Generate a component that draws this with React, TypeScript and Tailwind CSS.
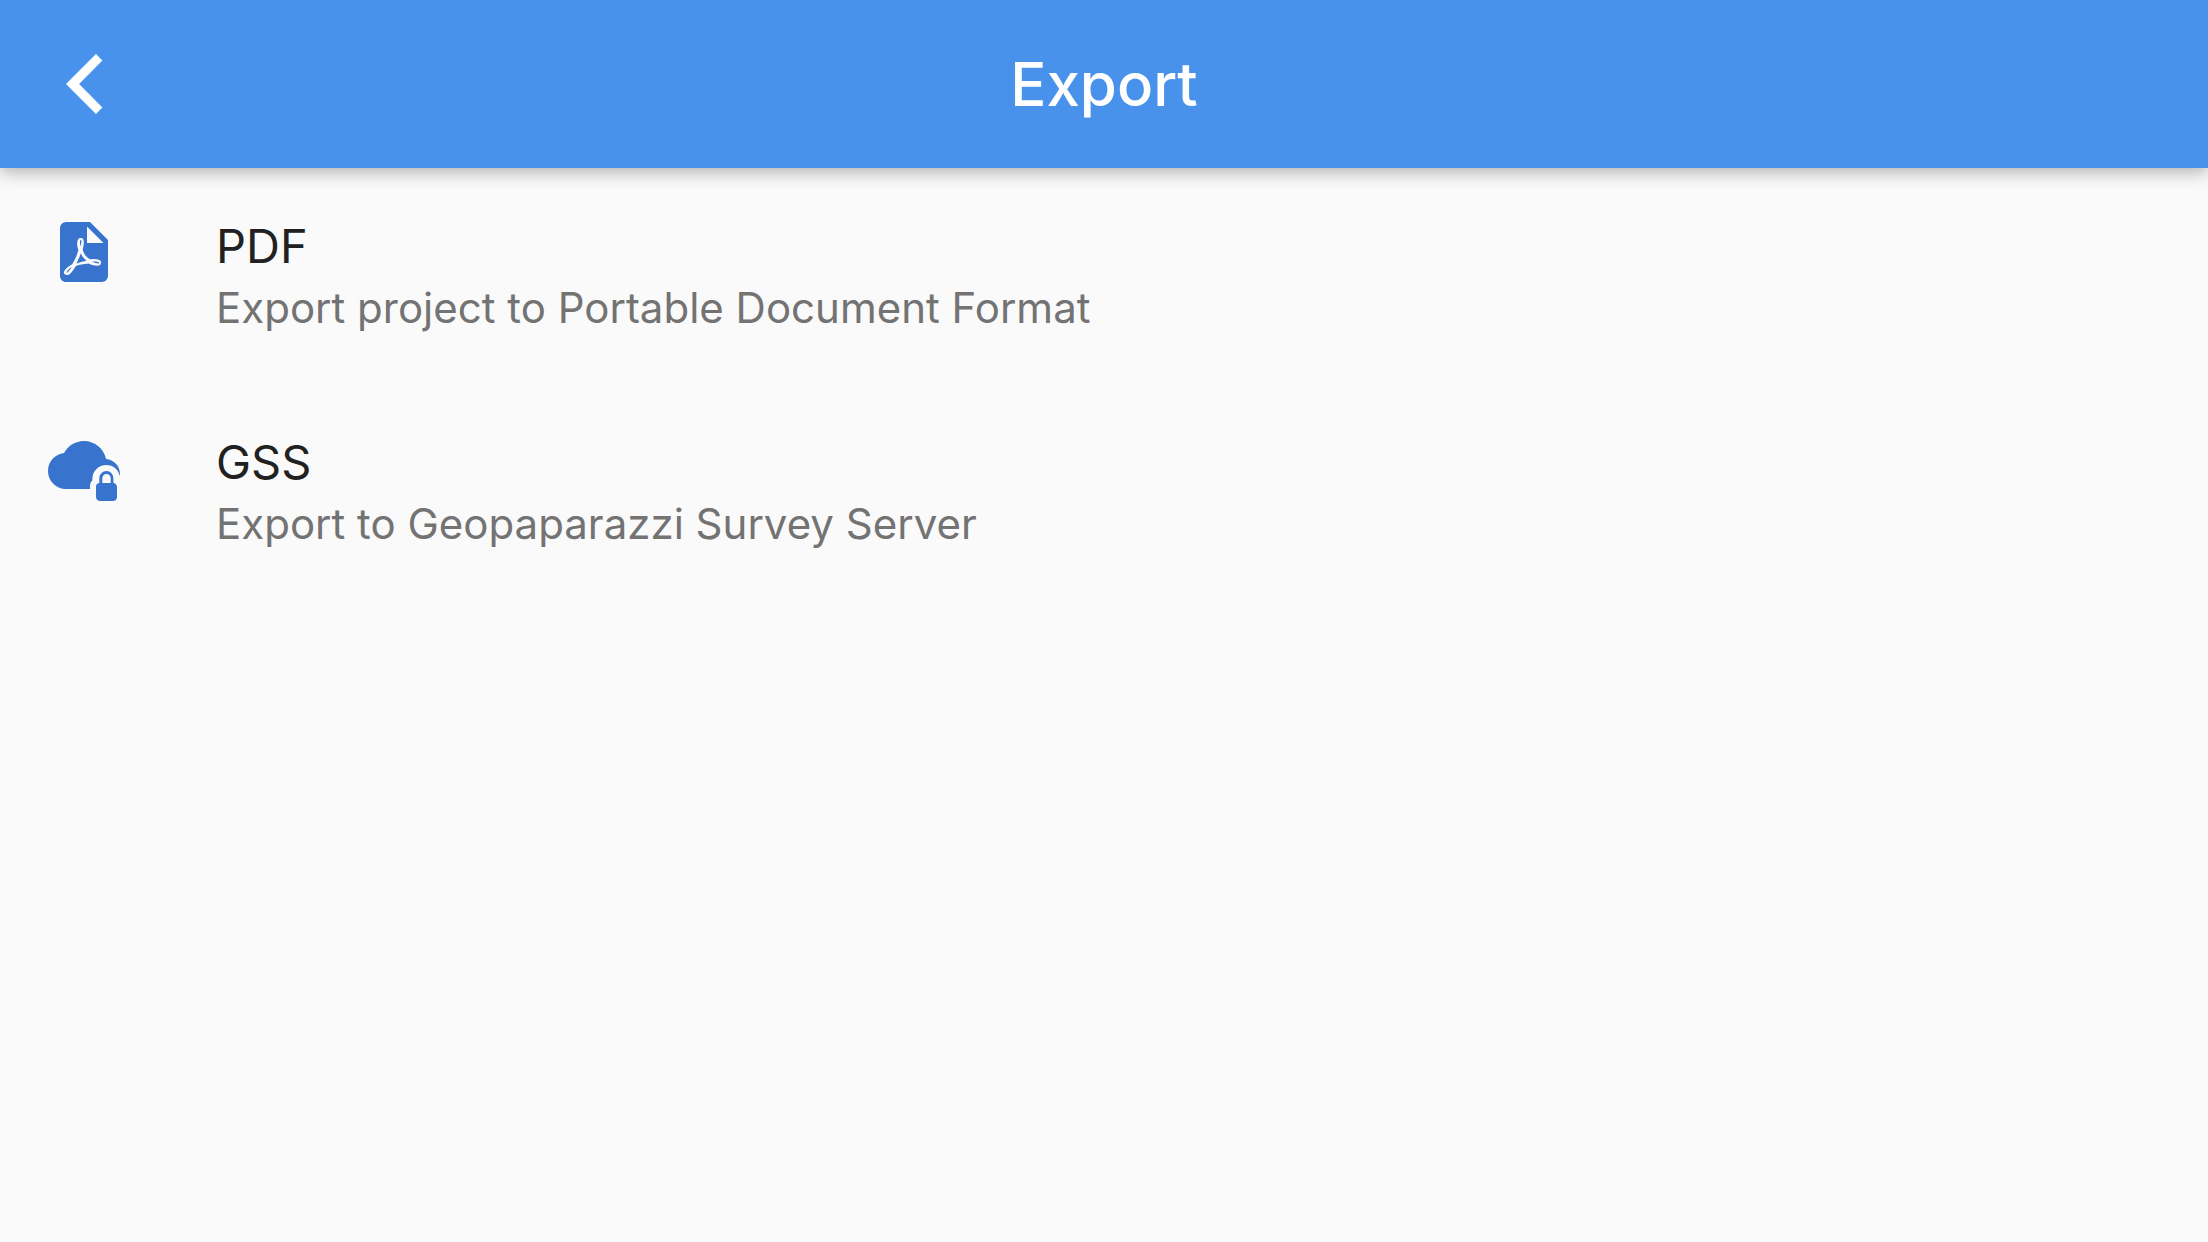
import type { ReactNode } from "react";

function BackIcon() {
  return (
    <svg viewBox="0 0 72 72" className="size-[72px]" fill="currentColor" aria-hidden="true">
      <path d="M48 6L54.4 12.4L31.1 36L54.4 59.6L48 66L18 36Z" />
    </svg>
  );
}

function PdfIcon() {
  return (
    <svg viewBox="1 0 24 24" className="size-[72px]" fill="currentColor" aria-hidden="true">
      <path d="M14,9H19.5L14,3.5V9M7,2H15L21,8V20A2,2 0 0,1 19,22H7C5.89,22 5,21.1 5,20V4A2,2 0 0,1 7,2M11.93,12.44C12.34,13.34 12.86,14.08 13.46,14.59L13.87,14.91C13,15.07 11.8,15.35 10.53,15.84V15.84L10.42,15.88L10.92,14.84C11.37,13.97 11.7,13.18 11.93,12.44M18.41,16.25C18.59,16.07 18.68,15.84 18.69,15.59C18.72,15.39 18.67,15.2 18.57,15.04C18.28,14.57 17.53,14.35 16.29,14.35L15,14.42L14.13,13.84C13.5,13.32 12.93,12.41 12.53,11.28L12.57,11.14C12.9,9.81 13.21,8.2 12.55,7.54C12.39,7.38 12.17,7.3 11.94,7.3H11.7C11.33,7.3 11,7.69 10.91,8.07C10.54,9.4 10.76,10.13 11.13,11.34V11.35C10.88,12.23 10.56,13.25 10.05,14.28L9.09,16.08L8.2,16.57C7,17.32 6.43,18.16 6.32,18.69C6.28,18.88 6.3,19.05 6.37,19.23L6.4,19.28L6.88,19.59L7.32,19.7C8.13,19.7 9.05,18.75 10.29,16.63L10.47,16.56C11.5,16.23 12.78,16 14.5,15.81C15.53,16.32 16.74,16.55 17.5,16.55C17.94,16.55 18.24,16.44 18.41,16.25M18,15.54L18.09,15.65C18.08,15.75 18.05,15.76 18,15.78H17.96L17.77,15.8C17.31,15.8 16.6,15.61 15.87,15.29C15.96,15.19 16,15.19 16.1,15.19C17.5,15.19 17.9,15.44 18,15.54M8.83,17C8.18,18.19 7.59,18.85 7.14,19C7.19,18.62 7.64,17.96 8.35,17.31L8.83,17M11.85,10.09C11.62,9.19 11.61,8.46 11.78,8.04L11.85,7.92L12,7.97C12.17,8.21 12.19,8.53 12.09,9.07L12.06,9.23L11.9,10.05L11.85,10.09Z" />
    </svg>
  );
}

function CloudLockIcon() {
  return (
    <svg viewBox="0 0 24 24" className="size-[72px]" fill="currentColor" aria-hidden="true">
      <path d="M19.35 9.03C18.67 5.59 15.64 3 12 3C9.11 3 6.6 4.64 5.35 7.04C2.34 7.36 0 9.9 0 13A6 6 0 0 0 6 19H14V18C14 17.26 14.3 16.6 14.8 16.1V15.5C14.8 13 16.9 11 19.4 11C21.7 11 23.6 12.6 23.9 14.7L24 14C24 11.36 21.95 9.22 19.35 9.03Z" />
      <path d="M21.8 17V15.5C21.8 14.1 20.8 13 19.5 13S17.1 14.1 17.1 15.5V17C16.5 17 16 17.6 16 18.2V21.7C16 22.4 16.6 23 17.2 23H21.7C22.4 23 23 22.4 23 21.8V18.3C23 17.6 22.4 17 21.8 17M20.9 17H18.1V15.5C18.1 14.6 18.7 14 19.5 14S20.9 14.6 20.9 15.5V17Z" />
    </svg>
  );
}

function ExportItem({ icon, title, subtitle }: { icon: ReactNode; title: string; subtitle: string }) {
  return (
    <li>
      <button type="button" className="flex h-[216px] w-full items-start gap-24 px-12 pt-12 text-left">
        <span className="shrink-0 text-[#3874cd]">{icon}</span>
        <span className="flex min-w-0 flex-col">
          <span className="text-[47px] leading-[60px] text-[#212121]">{title}</span>
          <span className="text-[42px] leading-[64px] text-[#737373]">{subtitle}</span>
        </span>
      </button>
    </li>
  );
}

export default function App() {
  return (
    <div className="flex min-h-screen flex-col bg-[#fafafa] font-['Inter',sans-serif]">
      <header className="z-10 grid h-[168px] grid-cols-[168px_1fr_168px] items-center bg-[#4892ec] text-white shadow-[0_4px_16px_rgba(0,0,0,0.3)]">
        <button type="button" aria-label="Back" className="flex h-full items-center justify-center">
          <BackIcon />
        </button>
        <h1 className="text-center text-[60px] leading-[72px] font-medium">Export</h1>
      </header>
      <main>
        <ul>
          <ExportItem icon={<PdfIcon />} title="PDF" subtitle="Export project to Portable Document Format" />
          <ExportItem icon={<CloudLockIcon />} title="GSS" subtitle="Export to Geopaparazzi Survey Server" />
        </ul>
      </main>
    </div>
  );
}
